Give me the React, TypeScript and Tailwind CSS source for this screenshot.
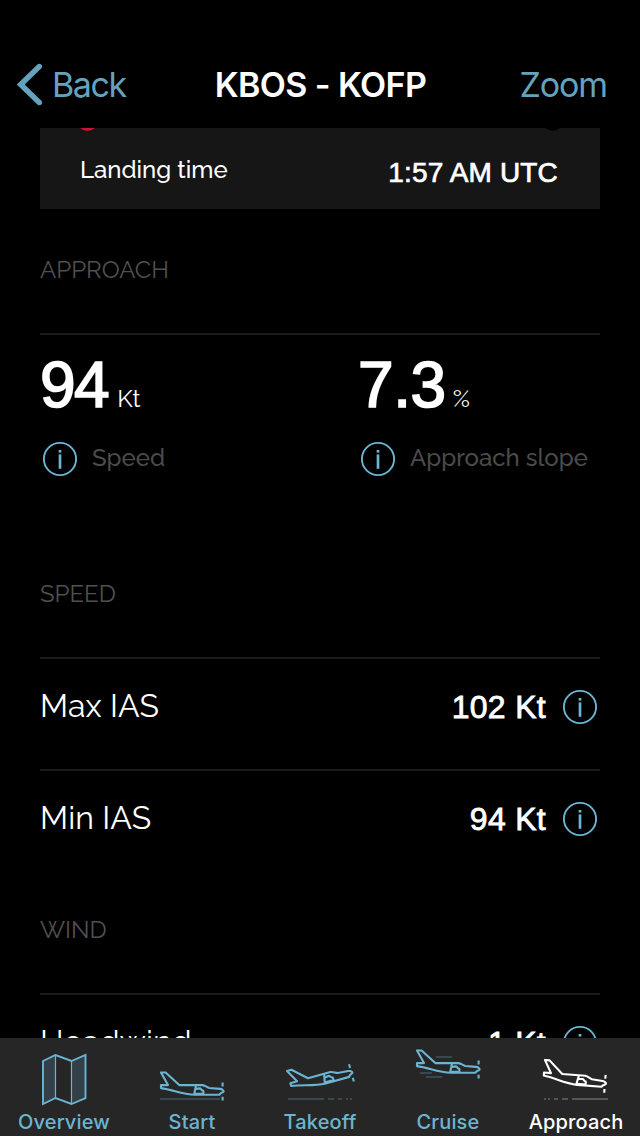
import type { ReactNode } from "react";

const label = "font-['Raleway','Lato',sans-serif]";
const value = "font-['Liberation_Sans',Arial,sans-serif]";

function InfoIcon() {
  return (
    <svg width="36" height="36" viewBox="0 0 36 36" fill="none" className="shrink-0">
      <circle cx="18" cy="18" r="16.1" stroke="#6bb5d2" strokeWidth="1.9" />
      <path d="M18 13.4v14.4" stroke="#6bb5d2" strokeWidth="2.7" />
      <path d="M18 9v2.6" stroke="#6bb5d2" strokeWidth="2.7" />
    </svg>
  );
}

function Plane() {
  return (
    <g fill="none" stroke="currentColor" strokeWidth="2.1" strokeLinejoin="round">
      <path d="M0 0H4.6L18.3 12.6H41.5C44 12.8 45.8 14.7 48.3 15.5L59 16.4C61 16.6 62.8 17.8 62.6 19C62.4 20.2 59.3 19.8 58.4 22.3H34C21 21.6 12 17.3 0 15.6V12.6H7Z" />
      <path d="M35 12.8L33.1 22.1M34.7 16.4L39.2 15.9L41 17.8L42.4 18.5V21.2H34.2" />
      <path d="M61.6 10V14M61.6 24.2V28" />
    </g>
  );
}

function Row({ name, amount }: { name: string; amount: string }) {
  return (
    <div className="flex h-[112px] items-start justify-between border-t-2 border-[#1b1b1b] pt-[30px]">
      <span className={`${label} mt-[-1px] text-[32px] leading-9 tracking-[0.1px]`}>{name}</span>
      <div className="flex items-start">
        <span className={`${value} mr-4 whitespace-nowrap text-[32px] leading-9 tracking-[0.3px] [-webkit-text-stroke:0.8px_white]`}>
          {amount}
        </span>
        <div className="mr-[2px]"><InfoIcon /></div>
      </div>
    </div>
  );
}

function Metric({ amount, unit, name, amountClass, unitGap }: { amount: string; unit: string; name: string; amountClass: string; unitGap: string }) {
  return (
    <div>
      <div className="flex h-[72px] items-baseline whitespace-nowrap">
        <span className={`${value} ${amountClass} text-[64px] leading-[72px] [-webkit-text-stroke:1.7px_white]`}>{amount}</span>
        <span className={`${label} ${unitGap} text-[24px]`}>{unit}</span>
      </div>
      <div className="mt-[20px] flex items-center pl-[2px]">
        <InfoIcon />
        <span className={`${label} ml-[14px] mt-[-3px] whitespace-nowrap text-[24px] font-medium text-[#4b4b4b]`}>{name}</span>
      </div>
    </div>
  );
}

function SectionTitle({ children }: { children: ReactNode }) {
  return <h2 className={`${label} text-[24px] leading-8 text-[#505050]`}>{children}</h2>;
}

function Tab({ name, active, children }: { name: string; active?: boolean; children: ReactNode }) {
  return (
    <div className={`flex w-32 flex-col items-center ${active ? "text-white" : "text-[#6bb5d2]"}`}>
      <svg width="128" height="70" viewBox="0 0 128 70" fill="none">{children}</svg>
      <span className="font-['Inter',sans-serif] text-[20px] font-medium leading-7 tracking-[0.15px]">{name}</span>
    </div>
  );
}

export default function App() {
  return (
    <div className="flex h-[1136px] w-[640px] flex-col overflow-hidden bg-black text-white">
      <header className="grid h-[128px] shrink-0 grid-cols-[1fr_auto_1fr] items-center pl-[17px] pr-[33px] pt-[41px] font-['Inter',sans-serif] text-[34px] leading-[44px]">
        <div className="flex items-center text-[#64a3bd]">
          <svg width="27" height="44" viewBox="0 0 27 44" fill="none">
            <path d="M22.3 3.5L3.7 21.5L22.3 39.5" stroke="currentColor" strokeWidth="5.4" strokeLinecap="round" strokeLinejoin="miter" />
          </svg>
          <span className="ml-[8px] tracking-[-1.4px]">Back</span>
        </div>
        <h1 className="relative left-[8.5px] whitespace-nowrap font-semibold tracking-[-0.6px]">KBOS - KOFP</h1>
        <span className="text-right tracking-[-1.1px] text-[#64a3bd]">Zoom</span>
      </header>

      <main className="h-[910px] shrink-0 overflow-hidden px-10">
        <section className="relative flex h-[81px] items-center justify-between overflow-hidden bg-[#161616] pl-10 pr-[42px]">
          <i className="absolute left-[38px] top-[-16px] size-[19px] rounded-full bg-[#cf1238]" />
          <i className="absolute left-[503px] top-[-16px] size-[19px] rounded-full bg-black" />
          <span className={`${label} mt-[3px] text-[24px] font-medium`}>Landing time</span>
          <span className={`${value} mt-[9px] text-[28px] tracking-[0.15px] [-webkit-text-stroke:0.7px_white]`}>1:57 AM UTC</span>
        </section>

        <section className="h-[324px] pt-[45px]">
          <SectionTitle>APPROACH</SectionTitle>
          <div className="mt-[47px] grid grid-cols-[318px_1fr] border-t-2 border-[#1b1b1b] pt-[14px]">
            <Metric amount="94" unit="Kt" name="Speed" amountClass="tracking-[-1.5px]" unitGap="ml-[9px]" />
            <Metric amount="7.3" unit="%" name="Approach slope" amountClass="tracking-[-0.4px]" unitGap="ml-[7px]" />
          </div>
        </section>

        <section className="h-[336px] pt-[45px]">
          <SectionTitle>SPEED</SectionTitle>
          <div className="mt-[47px]">
            <Row name="Max IAS" amount="102 Kt" />
            <Row name="Min IAS" amount="94 Kt" />
          </div>
        </section>

        <section className="pt-[45px]">
          <SectionTitle>WIND</SectionTitle>
          <div className="mt-[47px]"><Row name="Headwind" amount="1 Kt" /></div>
        </section>
      </main>

      <nav className="flex h-[98px] shrink-0 bg-[#262626]">
        <Tab name="Overview">
          <path d="M43 23L55.5 17V60L43 66ZM71.5 23L85.5 17V60L71.5 66Z" fill="#334047" />
          <path d="M43 23L55.5 17L71.5 23L85.5 17V60L71.5 66L55.5 60L43 66Z" stroke="currentColor" strokeWidth="1.9" />
          <path d="M55.5 17V60M71.5 23V66" stroke="currentColor" strokeWidth="1.2" />
        </Tab>
        <Tab name="Start">
          <g transform="translate(33 34.5)"><Plane /></g>
          <path d="M32 61H92" stroke="#364851" strokeWidth="2" />
        </Tab>
        <Tab name="Takeoff">
          <g transform="translate(31 33) rotate(-15.5)"><Plane /></g>
          <path d="M32 61H68M72 61H78M82 61H86M90 61H92M94 61H96" stroke="#364851" strokeWidth="2" />
        </Tab>
        <Tab name="Cruise">
          <g transform="translate(33 12.5)"><Plane /></g>
          <path d="M52 19H68M36 35H48M42 39H58" stroke="#364851" strokeWidth="2" />
        </Tab>
        <Tab name="Approach" active>
          <g transform="translate(33 22) rotate(4.5)"><Plane /></g>
          <path d="M32 61H34M36 61H38M42 61H46M50 61H56M60 61H96" stroke="#555555" strokeWidth="2" />
        </Tab>
      </nav>
    </div>
  );
}
